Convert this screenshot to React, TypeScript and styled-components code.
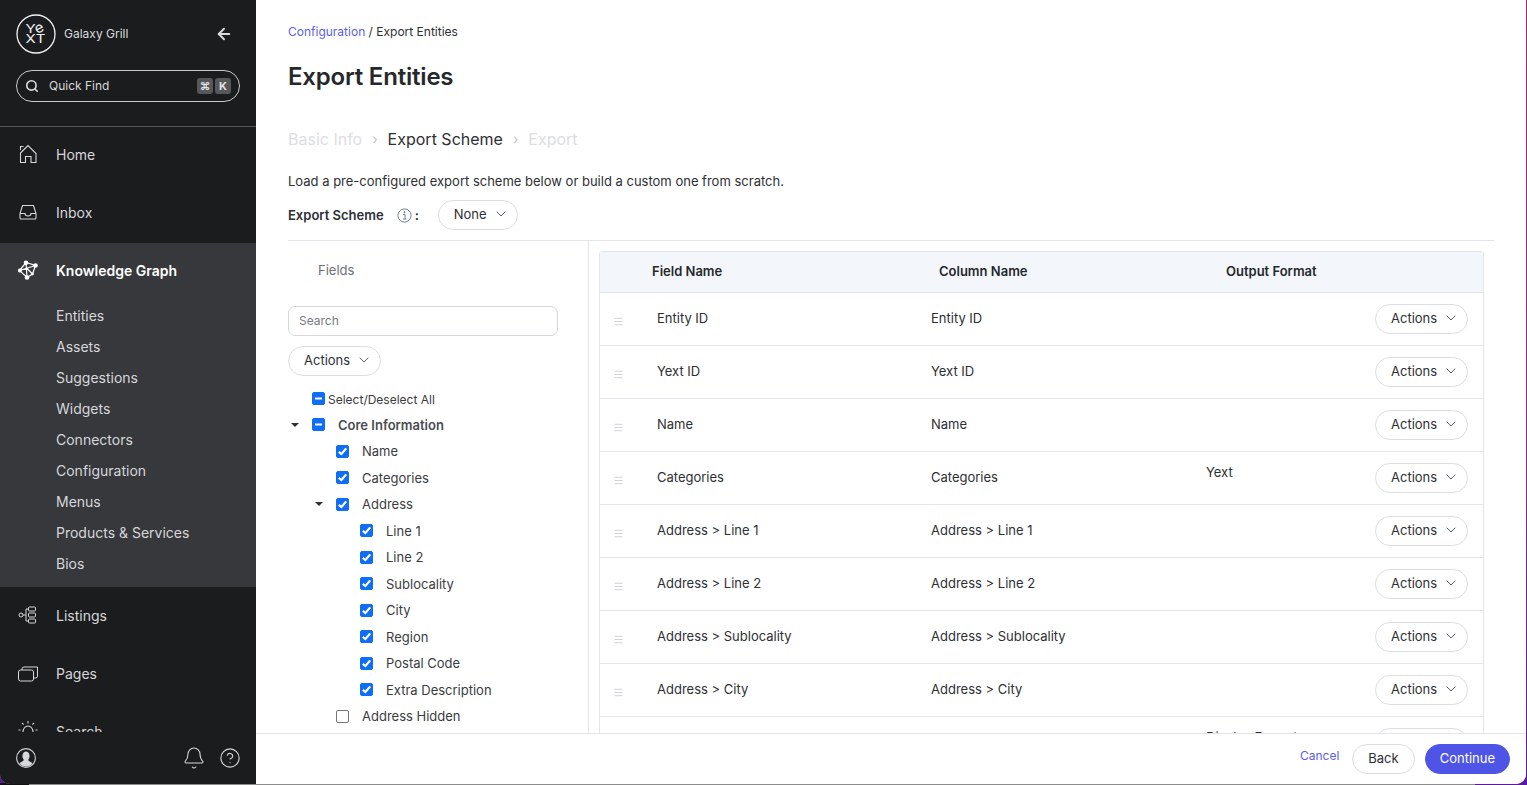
import React from 'react';
import styled, { createGlobalStyle } from 'styled-components';
import { ArrowLeft, Search, Bell, CircleHelp, ChevronDown, Menu } from 'lucide-react';

const GlobalStyle = createGlobalStyle`
  html, body {
    margin: 0;
    padding: 0;
    height: 100%;
    overflow: hidden;
  }
  html {
    background:
      linear-gradient(90deg, #111 0 29px, #8c8c8c 29px 1475px, #5b1a9e 1475px) bottom / 100% 2px no-repeat,
      linear-gradient(180deg, #a02a6c 0%, #8a2a8c 60%, #5b1a9e 100%);
  }
  * { box-sizing: border-box; }
  body {
    font-family: Inter, "Liberation Sans", sans-serif;
    color: #2d2f33;
    -webkit-font-smoothing: antialiased;
  }
`;

const Window = styled.div`
  display: flex;
  width: 1526px;
  height: 784px;
  overflow: hidden;
  border-radius: 0 0 10px 10px;
  background: #fff;
`;

const Sidebar = styled.aside`
  width: 256px;
  flex: none;
  display: flex;
  flex-direction: column;
  background: #1b1c1e;
  color: #d6d7da;
`;

const SideTop = styled.div`
  height: 127px;
  flex: none;
  padding: 14px 16px 0;
  border-bottom: 1px solid #55575b;
`;

const Brand = styled.div`
  display: flex;
  align-items: center;
  height: 40px;
`;

const BrandName = styled.span`
  margin: 0 0 2px 8px;
  font-size: 12px;
  flex: 1;
  color: #d9dadc;
`;

const BackButton = styled.span`
  display: flex;
  margin-right: 7px;
  color: #d9dadc;
`;

const QuickFind = styled.div`
  margin-top: 16px;
  height: 32px;
  display: flex;
  align-items: center;
  padding: 0 8px 1px;
  border: 1px solid #c9cacc;
  border-radius: 16px;
  font-size: 12px;
  color: #d9dadc;
`;

const QuickLabel = styled.span`
  flex: 1;
  margin-left: 10px;
`;

const Key = styled.span`
  width: 16px;
  height: 16px;
  margin-left: 2px;
  display: flex;
  align-items: center;
  justify-content: center;
  border-radius: 3px;
  background: #55575b;
  color: #e2e3e5;
  font-size: 11px;
  font-weight: 700;
`;

const Nav = styled.nav`
  flex: 1;
  min-height: 0;
  overflow: hidden;
`;

const NavItem = styled.div<{ $active?: boolean }>`
  height: 58px;
  flex: none;
  display: flex;
  align-items: center;
  padding: 0 0 4px 18px;
  font-size: 14px;
  font-weight: ${(p) => (p.$active ? 600 : 400)};
  color: ${(p) => (p.$active ? '#ffffff' : '#d6d7da')};
`;

const NavIcon = styled.span`
  width: 38px;
  flex: none;
  display: flex;
  color: #d6d7da;
`;

const NavGroup = styled.div`
  background: #36383c;
  padding-bottom: 7px;
  margin-bottom: 1px;
`;

const SubItem = styled.div`
  height: 31px;
  display: flex;
  align-items: center;
  padding: 0 0 2px 56px;
  font-size: 14px;
  color: #d6d7da;
`;

const SideBottom = styled.div`
  height: 52px;
  flex: none;
  display: flex;
  align-items: center;
  padding: 0 15px 0 16px;
  color: #d6d7da;
  gap: 13px;
  background: #1b1c1e;
`;

const Spacer = styled.span`
  flex: 1;
`;

const Main = styled.main`
  flex: 1;
  min-width: 0;
  display: flex;
  flex-direction: column;
`;

const Content = styled.div`
  flex: 1;
  min-height: 0;
  overflow: hidden;
  padding: 24px 32px 0;
`;

const Crumbs = styled.div`
  font-size: 12px;
  line-height: 16px;
  color: #2d2f33;
`;

const CrumbLink = styled.span`
  color: #5a5fe8;
`;

const Title = styled.h1`
  margin: 17px 0 0;
  font-size: 24px;
  line-height: 40px;
  font-weight: 600;
  letter-spacing: -0.2px;
  color: #26282c;
`;

const Steps = styled.div`
  margin-top: 32px;
  display: flex;
  align-items: center;
  font-size: 16px;
  line-height: 20px;
`;

const Step = styled.span<{ $current?: boolean }>`
  color: ${(p) => (p.$current ? '#2d2f33' : '#dcdee2')};
`;

const StepSep = styled.span`
  margin: 0 10px;
  font-size: 14px;
  color: #c4c7cc;
`;

const Intro = styled.p`
  margin: 24px 0 0;
  font-size: 13px;
  line-height: 16px;
`;

const SchemeRow = styled.div`
  margin-top: 11px;
  height: 40px;
  display: flex;
  align-items: flex-start;
  font-size: 13px;
  font-weight: 600;
  line-height: 30px;
`;

const SchemeLabel = styled.span`
  display: flex;
  align-items: center;
  height: 30px;
  margin-right: 19px;
`;

const InfoIcon = styled.span`
  display: flex;
  margin: 0 3px 0 13px;
  color: #74808f;
`;

const Pill = styled.div<{ $w?: number }>`
  width: ${(p) => p.$w ?? 93}px;
  height: 30px;
  flex: none;
  display: flex;
  align-items: center;
  justify-content: space-between;
  padding: 0 8px 2px 15px;
  background: #fff;
  border: 1px solid #dcdee2;
  border-radius: 15px;
  font-size: 13px;
  font-weight: 400;
  color: #2d2f33;
  svg { color: #4a5563; }
`;

const Split = styled.div`
  display: flex;
  border-top: 1px solid #e3e5ea;
`;

const Fields = styled.section`
  width: 301px;
  flex: none;
  padding-right: 30px;
  border-right: 1px solid #e3e5ea;
`;

const FieldsTitle = styled.div`
  margin: 21px 0 0 30px;
  font-size: 13px;
  line-height: 16px;
  color: #6d7178;
`;

const SearchBox = styled.div`
  margin-top: 28px;
  height: 30px;
  display: flex;
  align-items: center;
  padding: 0 0 1px 10px;
  border: 1px solid #d6d8dd;
  border-radius: 7px;
  font-size: 12px;
  color: #767a81;
`;

const FieldActions = styled.div`
  margin-top: 10px;
`;

const Tree = styled.div`
  margin-top: 9.1px;
`;

const TreeRow = styled.div<{ $level: number }>`
  height: 26.5px;
  display: flex;
  align-items: center;
  padding-left: ${(p) => 24 + p.$level * 24}px;
  position: relative;
  font-size: 13px;
  color: #3a3c40;
`;

const Caret = styled.span`
  position: absolute;
  margin-left: -21px;
  width: 0;
  height: 0;
  border-left: 4px solid transparent;
  border-right: 4px solid transparent;
  border-top: 4px solid #2d2f33;
`;

const Box = styled.span<{ $on?: boolean }>`
  width: 13px;
  height: 13px;
  flex: none;
  display: flex;
  align-items: center;
  justify-content: center;
  border-radius: 2px;
  background: ${(p) => (p.$on ? '#0f6ef5' : '#fff')};
  border: 1px solid ${(p) => (p.$on ? '#0f6ef5' : '#767676')};
`;

const TreeLabel = styled.span<{ $bold?: boolean; $tight?: boolean }>`
  margin-left: ${(p) => (p.$tight ? 3 : 13)}px;
  font-weight: ${(p) => (p.$bold ? 600 : 400)};
  font-size: ${(p) => (p.$tight ? 12 : 13)}px;
  color: ${(p) => (p.$bold ? '#4a4c50' : '#3a3c40')};
  position: relative;
  top: ${(p) => (p.$tight ? 1 : 0)}px;
`;

const TableArea = styled.section`
  flex: 1;
  min-width: 0;
  padding: 10px 10px 0;
`;

const Table = styled.div`
  border: 1px solid #e3e5ea;
  border-radius: 3px 3px 0 0;
  font-size: 13px;
`;

const HeadRow = styled.div`
  height: 41px;
  display: grid;
  grid-template-columns: 287px 287px 1fr;
  align-items: center;
  padding: 0 0 2px 52px;
  background: #f3f7fc;
  border-bottom: 1px solid #e3e5ea;
  font-size: 13px;
  font-weight: 600;
  color: #26282c;
`;

const Row = styled.div`
  height: 53px;
  display: grid;
  grid-template-columns: 57px 274px 275px 1fr auto;
  padding-right: 15px;
  align-items: center;
  border-bottom: 1px solid #e3e5ea;
`;

const Handle = styled.span`
  display: flex;
  padding: 5px 0 0 13px;
  color: #9aa3ad;
`;

const Cell = styled.span`
  margin-top: -2px;
`;

const Output = styled.span`
  align-self: start;
  margin-top: 12px;
  line-height: 16px;
`;

const Footer = styled.footer`
  height: 51px;
  flex: none;
  display: flex;
  align-items: center;
  justify-content: flex-end;
  padding-right: 16px;
  border-top: 1px solid #e3e5ea;
  background: #fff;
`;

const CancelLink = styled.span`
  margin: -8px 13px 0 0;
  font-size: 12px;
  color: #5a5fe8;
`;

const FootButton = styled.span<{ $primary?: boolean }>`
  height: 30px;
  margin-left: ${(p) => (p.$primary ? 10 : 0)}px;
  padding: 0 ${(p) => (p.$primary ? 14 : 15)}px 2px;
  display: flex;
  align-items: center;
  border-radius: 15px;
  font-size: 13px;
  border: 1px solid ${(p) => (p.$primary ? '#4e55e6' : '#dcdee2')};
  background: ${(p) => (p.$primary ? '#4e55e6' : '#fff')};
  color: ${(p) => (p.$primary ? '#fff' : '#2d2f33')};
`;

const YextLogo = () => (
  <svg width="40" height="40" viewBox="0 0 40 40" fill="none">
    <circle cx="20" cy="20" r="19" stroke="#f2f2f2" strokeWidth="1.3" />
    <g fill="#f2f2f2" fontFamily="Inter, sans-serif" fontSize="15" textAnchor="middle">
      <text transform="translate(14.5 18.7) scale(1 0.82)">Y</text>
      <text transform="translate(25 18.2) rotate(-25) scale(1 0.95)">e</text>
      <text transform="translate(14.5 29) scale(1 0.82)">X</text>
      <text transform="translate(24.5 29) scale(1 0.82)">T</text>
    </g>
  </svg>
);

const HomeIcon = () => (
  <svg width="20" height="20" viewBox="0 0 20 20" fill="none" stroke="#d6d7da" strokeWidth="1.1">
    <path d="M2.5 9 L10 1.5 L18 9.5 V18.5 H13 V12.5 H7.5 V18.5 H2.5 Z M2.5 6 V2.5 H5.5" />
  </svg>
);

const InboxIcon = () => (
  <svg width="20" height="20" viewBox="0 0 20 20" fill="none" stroke="#d6d7da" strokeWidth="1.1">
    <path d="M4.5 3.5 H15.5 L18 11.5 V16 a1 1 0 0 1 -1 1 H3 a1 1 0 0 1 -1 -1 V11.5 Z" />
    <path d="M2 11.5 H7 a3 2.5 0 0 0 6 0 H18" />
  </svg>
);

const GraphIcon = () => (
  <svg width="21" height="21" viewBox="0 0 21 21" fill="none" stroke="#fff" strokeWidth="1.2">
    <path d="M8 2.5 L17.5 5.5 L14.5 14 L9 17.5 L1.5 10.5 Z M8 2.5 L9 17.5 M1.5 10.5 L17.5 5.5 M8.5 8 L14.5 14" />
    <g fill="#fff" stroke="none">
      <circle cx="8" cy="2.7" r="2.3" />
      <circle cx="17.5" cy="5.5" r="2.3" />
      <circle cx="1.9" cy="10.5" r="2" />
      <circle cx="9" cy="17.5" r="2.3" />
      <circle cx="14.5" cy="14" r="1.4" />
    </g>
  </svg>
);

const ListingsIcon = () => (
  <svg width="20" height="20" viewBox="0 0 20 20" fill="none" stroke="#d6d7da" strokeWidth="1">
    <circle cx="3" cy="10" r="2" />
    <path d="M5 10 H8 M8 4 H10 M8 16 H10 M8 4 V16" />
    <rect x="10.5" y="2" width="7" height="4" rx="1" />
    <rect x="10.5" y="8" width="7" height="4" rx="1" />
    <rect x="10.5" y="14" width="7" height="4" rx="1" />
  </svg>
);

const PagesIcon = () => (
  <svg width="20" height="20" viewBox="0 0 20 20" fill="none" stroke="#d6d7da" strokeWidth="1">
    <rect x="0.5" y="7" width="15" height="11" rx="2" />
    <path d="M4 7 V6 a2 2 0 0 1 2 -2 H19.5 V13 a2 2 0 0 1 -2 2 H15.5" />
  </svg>
);

const SearchNavIcon = () => (
  <svg width="20" height="20" viewBox="0 0 20 20" fill="none" stroke="#d6d7da" strokeWidth="1.1">
    <path d="M5 11 a5 6 0 0 1 10 0 M10 0 V2.5 M4 2 L5.5 3.5 M16 2 L14.5 3.5 M0.5 9 H2.5 M17.5 9 H19.5" />
  </svg>
);

const UserIcon = () => (
  <svg width="20" height="20" viewBox="0 0 20 20">
    <defs>
      <clipPath id="user-clip">
        <circle cx="10" cy="10" r="8.6" />
      </clipPath>
    </defs>
    <circle cx="10" cy="10" r="9.4" fill="#1b1c1e" stroke="#d6d7da" strokeWidth="1.1" />
    <g clipPath="url(#user-clip)" fill="#d6d7da">
      <ellipse cx="10" cy="8" rx="3.6" ry="4.6" />
      <path d="M1 20 C2 14 6 14.5 8 12 H12 C14 14.5 18 14 19 20 Z" />
    </g>
  </svg>
);

const Check = () => (
  <svg width="11" height="11" viewBox="0 0 11 11" fill="none" stroke="#fff" strokeWidth="2.2">
    <path d="M1.8 5.8 L4.4 8 L9.2 2.4" />
  </svg>
);

const Dash = () => (
  <svg width="11" height="11" viewBox="0 0 11 11" fill="none" stroke="#fff" strokeWidth="2">
    <path d="M2 5.5 H9" />
  </svg>
);

const Info = () => (
  <svg width="15" height="15" viewBox="0 0 15 15" fill="none" stroke="currentColor">
    <circle cx="7.5" cy="7.5" r="6.6" />
    <path d="M6 6.5 H8 V11 M6 11 H9.5" />
    <circle cx="7.5" cy="4.2" r="0.6" fill="currentColor" />
  </svg>
);

const ActionsPill = ({ label = 'Actions', w }: { label?: string; w?: number }) => (
  <Pill $w={w}>
    {label}
    <ChevronDown size={16} strokeWidth={1.4} />
  </Pill>
);

const subItems = ['Entities', 'Assets', 'Suggestions', 'Widgets', 'Connectors', 'Configuration', 'Menus', 'Products & Services', 'Bios'];

const treeRows = [
  { label: 'Select/Deselect All', level: 0, state: 'dash', tight: true },
  { label: 'Core Information', level: 0, state: 'dash', bold: true, caret: true },
  { label: 'Name', level: 1, state: 'on' },
  { label: 'Categories', level: 1, state: 'on' },
  { label: 'Address', level: 1, state: 'on', caret: true },
  { label: 'Line 1', level: 2, state: 'on' },
  { label: 'Line 2', level: 2, state: 'on' },
  { label: 'Sublocality', level: 2, state: 'on' },
  { label: 'City', level: 2, state: 'on' },
  { label: 'Region', level: 2, state: 'on' },
  { label: 'Postal Code', level: 2, state: 'on' },
  { label: 'Extra Description', level: 2, state: 'on' },
  { label: 'Address Hidden', level: 1, state: 'off' },
];

const tableRows = [
  { name: 'Entity ID' },
  { name: 'Yext ID' },
  { name: 'Name' },
  { name: 'Categories', output: 'Yext' },
  { name: 'Address > Line 1' },
  { name: 'Address > Line 2' },
  { name: 'Address > Sublocality' },
  { name: 'Address > City' },
  { name: 'Address > Region', output: 'Display Format' },
];

export default function App() {
  return (
    <>
      <GlobalStyle />
      <Window>
        <Sidebar>
          <SideTop>
            <Brand>
              <YextLogo />
              <BrandName>Galaxy Grill</BrandName>
              <BackButton>
                <ArrowLeft size={18} strokeWidth={2.6} />
              </BackButton>
            </Brand>
            <QuickFind>
              <Search size={14} strokeWidth={2.8} />
              <QuickLabel>Quick Find</QuickLabel>
              <Key>⌘</Key>
              <Key>K</Key>
            </QuickFind>
          </SideTop>
          <Nav>
            <NavItem>
              <NavIcon><HomeIcon /></NavIcon>Home
            </NavItem>
            <NavItem>
              <NavIcon><InboxIcon /></NavIcon>Inbox
            </NavItem>
            <NavGroup>
              <NavItem $active>
                <NavIcon><GraphIcon /></NavIcon>Knowledge Graph
              </NavItem>
              {subItems.map((s) => (
                <SubItem key={s}>{s}</SubItem>
              ))}
            </NavGroup>
            <NavItem>
              <NavIcon><ListingsIcon /></NavIcon>Listings
            </NavItem>
            <NavItem>
              <NavIcon><PagesIcon /></NavIcon>Pages
            </NavItem>
            <NavItem>
              <NavIcon><SearchNavIcon /></NavIcon>Search
            </NavItem>
          </Nav>
          <SideBottom>
            <UserIcon />
            <Spacer />
            <Bell size={24} strokeWidth={1.05} />
            <CircleHelp size={22} strokeWidth={1.2} />
          </SideBottom>
        </Sidebar>
        <Main>
          <Content>
            <Crumbs>
              <CrumbLink>Configuration</CrumbLink> / Export Entities
            </Crumbs>
            <Title>Export Entities</Title>
            <Steps>
              <Step>Basic Info</Step>
              <StepSep>›</StepSep>
              <Step $current>Export Scheme</Step>
              <StepSep>›</StepSep>
              <Step>Export</Step>
            </Steps>
            <Intro>Load a pre-configured export scheme below or build a custom one from scratch.</Intro>
            <SchemeRow>
              <SchemeLabel>
                Export Scheme
                <InfoIcon><Info /></InfoIcon>:
              </SchemeLabel>
              <ActionsPill label="None" w={80} />
            </SchemeRow>
            <Split>
              <Fields>
                <FieldsTitle>Fields</FieldsTitle>
                <SearchBox>Search</SearchBox>
                <FieldActions>
                  <ActionsPill />
                </FieldActions>
                <Tree>
                  {treeRows.map((r) => (
                    <TreeRow key={r.label} $level={r.level}>
                      {r.caret && <Caret />}
                      <Box $on={r.state !== 'off'}>
                        {r.state === 'on' && <Check />}
                        {r.state === 'dash' && <Dash />}
                      </Box>
                      <TreeLabel $bold={r.bold} $tight={r.tight}>{r.label}</TreeLabel>
                    </TreeRow>
                  ))}
                </Tree>
              </Fields>
              <TableArea>
                <Table>
                  <HeadRow>
                    <span>Field Name</span>
                    <span>Column Name</span>
                    <span>Output Format</span>
                  </HeadRow>
                  {tableRows.map((r) => (
                    <Row key={r.name}>
                      <Handle><Menu size={11} strokeWidth={1} /></Handle>
                      <Cell>{r.name}</Cell>
                      <Cell>{r.name}</Cell>
                      <Output>{r.output}</Output>
                      <ActionsPill />
                    </Row>
                  ))}
                </Table>
              </TableArea>
            </Split>
          </Content>
          <Footer>
            <CancelLink>Cancel</CancelLink>
            <FootButton>Back</FootButton>
            <FootButton $primary>Continue</FootButton>
          </Footer>
        </Main>
      </Window>
    </>
  );
}
